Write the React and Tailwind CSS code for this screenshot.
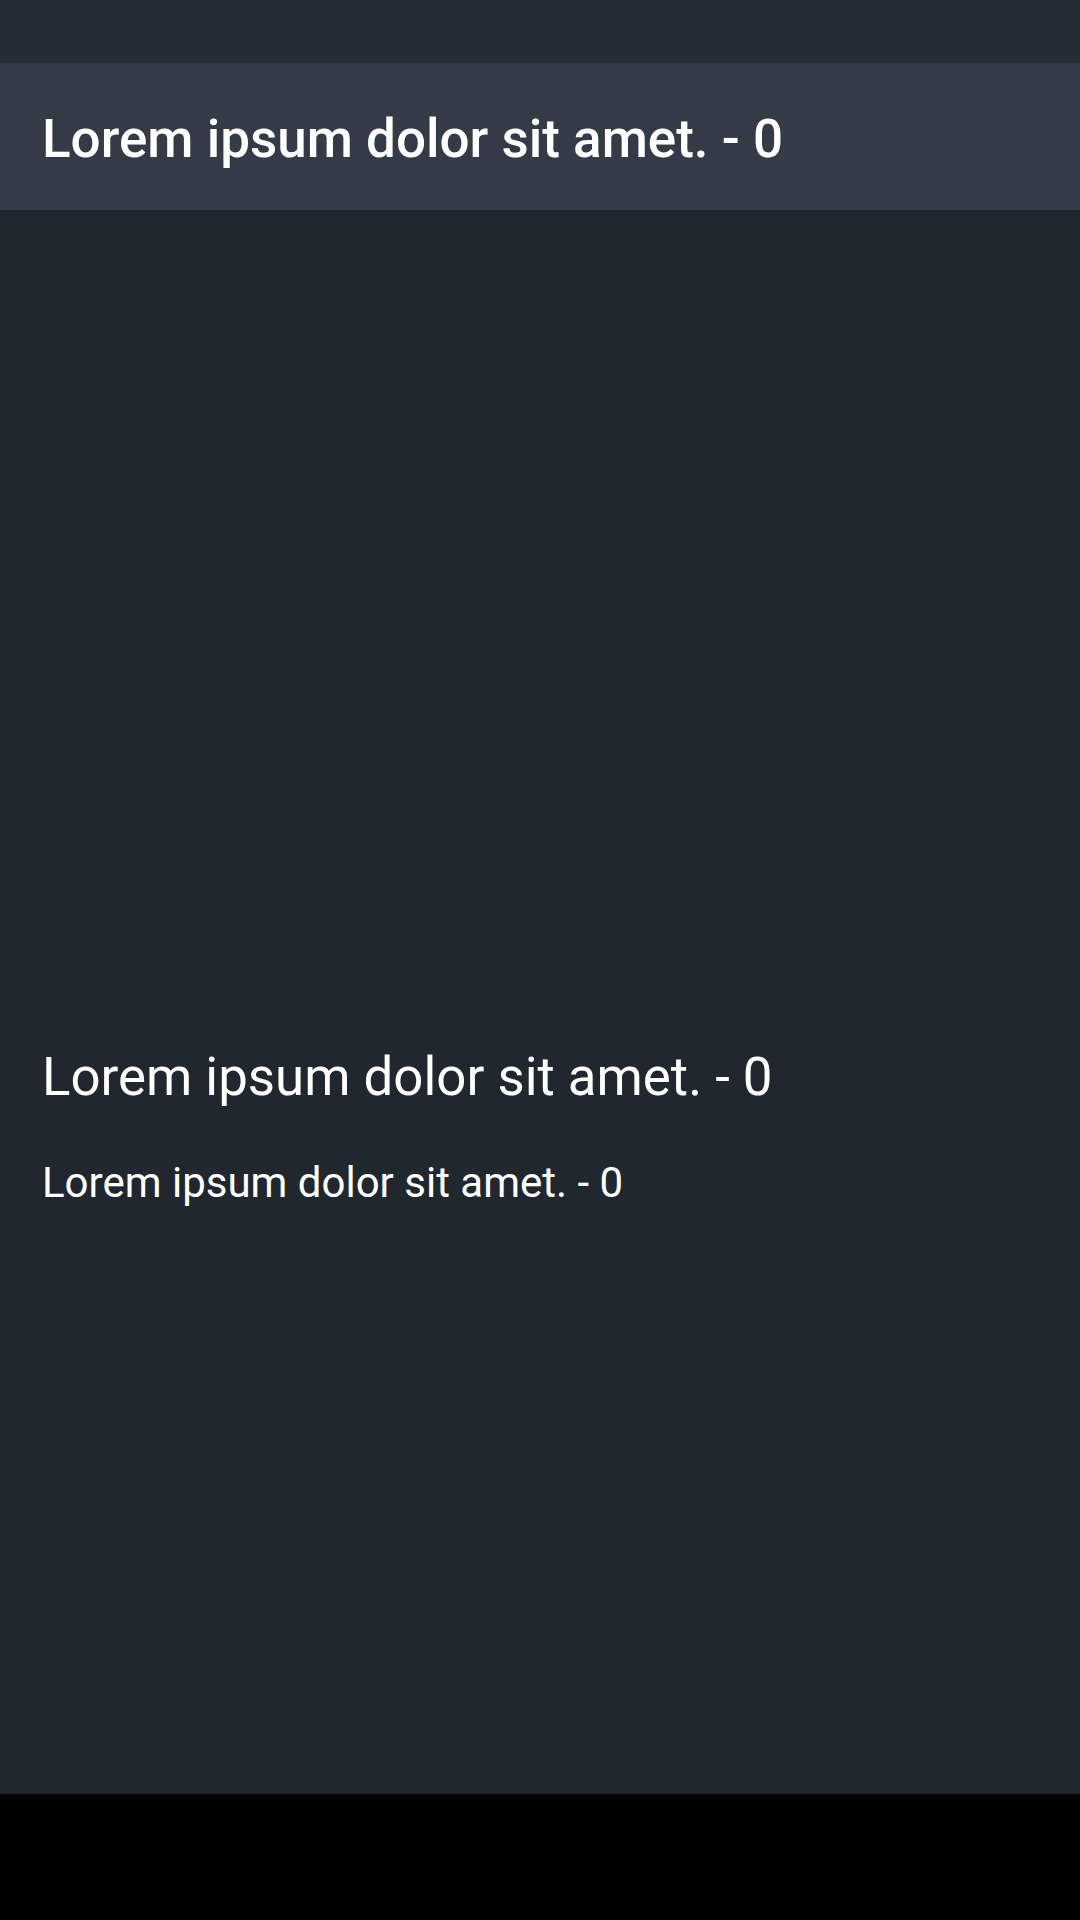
export default function App() {
  return (
    <div
      className="w-[1080px] h-[1920px] flex flex-col bg-[#21272f] text-white"
      style={{ fontFamily: 'Roboto, "Noto Sans", sans-serif' }}
    >
      {/* status bar */}
      <div className="h-[63px] shrink-0 bg-[#262c36]" />

      {/* toolbar */}
      <div className="h-[147px] shrink-0 bg-[#343a46] px-[42px] pt-[45px]">
        <h1 className="text-[53px] font-medium leading-[1.172]">Lorem ipsum dolor sit amet. - 0</h1>
      </div>

      {/* content */}
      <div className="flex-1 flex flex-col px-[42px] pt-[837px]">
        <p className="text-[52.8px] leading-[1.172]">Lorem ipsum dolor sit amet. - 0</p>
        <p className="text-[42px] leading-[1.172] mt-[49px]">Lorem ipsum dolor sit amet. - 0</p>
      </div>

      {/* navigation bar */}
      <div className="h-[126px] shrink-0 bg-black" />
    </div>
  )
}
